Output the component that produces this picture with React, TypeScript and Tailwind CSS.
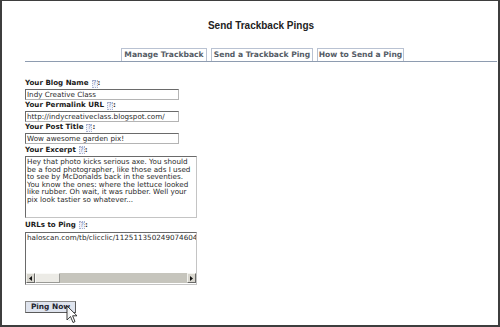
import React from "react";

const Help = () => (
  <span className="inline-flex items-center justify-center w-[6px] h-[8px] ml-[3px] text-[6.5px] leading-[7px] font-normal text-[#7486b4] bg-[#f0f2fa] border border-dotted border-[#a8b2d0]">?</span>
);

const Label = ({ text, h }: { text: string; h: string }) => (
  <div className={`${h} flex items-center text-[7.1px] font-bold text-[#1a1a1a] whitespace-nowrap`}>
    <span>{text}</span>
    <Help />
    <span>:</span>
  </div>
);

const Input = ({ value }: { value: string }) => (
  <div className="w-[154px] h-[11px] border border-[#b4b4b4] border-t-[#6a6a6a] border-l-[#6a6a6a] bg-white px-[1px] text-[7.2px] leading-[9px] text-[#2a2a2a] whitespace-nowrap overflow-hidden">
    {value}
  </div>
);

const excerpt = [
  "Hey that photo kicks serious axe. You should",
  "be a food photographer, like those ads I used",
  "to see by McDonalds back in the seventies.",
  "You know the ones: where the lettuce looked",
  "like rubber. Oh wait, it was rubber. Well your",
  "pix look tastier so whatever...",
];

export default function App() {
  return (
    <div className="relative w-[500px] h-[327px] overflow-hidden bg-white border-t border-l-2 border-r-2 border-b-2 border-[#3e3e3e] font-['DejaVu_Sans','Verdana',sans-serif]">
      <div className="ml-[23px] mr-[1px] flex flex-col">
        <div className="mt-[18px] h-[13px] leading-[13px] text-center text-[10px] font-bold text-[#222] font-['Liberation_Sans','Arial',sans-serif]">
          Send Trackback Pings
        </div>
        <div className="mt-[16px] ml-[96px] flex gap-[4px] h-[13px]">
          <div className="w-[86px] border border-b-0 border-[#b9c2d2] flex items-center justify-center text-[7.6px] font-bold text-[#555c66] whitespace-nowrap">Manage Trackback</div>
          <div className="w-[102px] border border-b-0 border-[#b9c2d2] flex items-center justify-center text-[7.6px] font-bold text-[#555c66] whitespace-nowrap">Send a Trackback Ping</div>
          <div className="w-[87px] border border-b-0 border-[#b9c2d2] flex items-center justify-center text-[7.6px] font-bold text-[#555c66] whitespace-nowrap">How to Send a Ping</div>
        </div>
        <div className="h-px bg-[#8e9cb0]" />
        <div className="mt-[16px] flex flex-col">
          <Label text="Your Blog Name" h="h-[11px]" />
          <Input value="Indy Creative Class" />
          <Label text="Your Permalink URL" h="h-[11px]" />
          <Input value="http://indycreativeclass.blogspot.com/" />
          <Label text="Your Post Title" h="h-[11px]" />
          <Input value="Wow awesome garden pix!" />
          <Label text="Your Excerpt" h="h-[12px]" />
          <div className="w-[172px] h-[62px] border border-[#c4c4c4] border-t-[#6a6a6a] border-l-[#6a6a6a] bg-white pl-[1px] pt-[1px] text-[7.2px] leading-[7.6px] text-[#2a2a2a] overflow-hidden">
            {excerpt.map((l) => (
              <div key={l} className="whitespace-nowrap">{l}</div>
            ))}
          </div>
          <Label text="URLs to Ping" h="h-[14px]" />
          <div className="w-[172px] h-[53px] border border-[#c4c4c4] border-t-[#6a6a6a] border-l-[#6a6a6a] bg-white overflow-hidden">
            <div className="h-[40px] pl-[1px] pt-[1px] text-[7.2px] leading-[8px] text-[#2a2a2a] whitespace-nowrap overflow-hidden">
              haloscan.com/tb/clicclic/112511350249074604
            </div>
            <div className="h-[10px] flex">
              <div className="w-[9px] h-[10px] bg-[#d8d6ce] border border-[#f4f4f0] border-r-[#6a6a68] border-b-[#6a6a68] flex items-center justify-center">
                <svg width="3" height="5" viewBox="0 0 3 5"><path d="M3 0 L0 2.5 L3 5 Z" fill="#111" /></svg>
              </div>
              <div className="w-[25px] h-[10px] bg-[#ecebe6] border border-[#fafaf8] border-r-[#9a9a96] border-b-[#9a9a96]" />
              <div className="flex-1 h-[10px] bg-[#c6c5bd]" />
              <div className="w-[9px] h-[10px] bg-[#d8d6ce] border border-[#f4f4f0] border-r-[#6a6a68] border-b-[#6a6a68] flex items-center justify-center">
                <svg width="3" height="5" viewBox="0 0 3 5"><path d="M0 0 L3 2.5 L0 5 Z" fill="#111" /></svg>
              </div>
            </div>
          </div>
          <div className="mt-[16px] w-[51px] h-[12px] bg-[#dfe4ee] border border-[#5a5a5a] border-t-[#8a8a8a] border-l-[#8a8a8a] flex items-center justify-center text-[7.4px] font-bold text-[#1e2430] whitespace-nowrap">
            Ping Now
          </div>
        </div>
      </div>
      <svg className="absolute left-[64px] top-[304px]" width="13" height="19" viewBox="0 0 13 19">
        <path d="M1 1 L1 15 L4.5 11.5 L7 17.5 L9 16.6 L6.6 10.8 L11 10.8 Z" fill="#fff" stroke="#222" strokeWidth="0.9" strokeLinejoin="round" />
        <path d="M3 4 L3 16 L5.5 13.5" fill="none" stroke="#9aa" strokeWidth="0.6" opacity="0.5" />
      </svg>
    </div>
  );
}
